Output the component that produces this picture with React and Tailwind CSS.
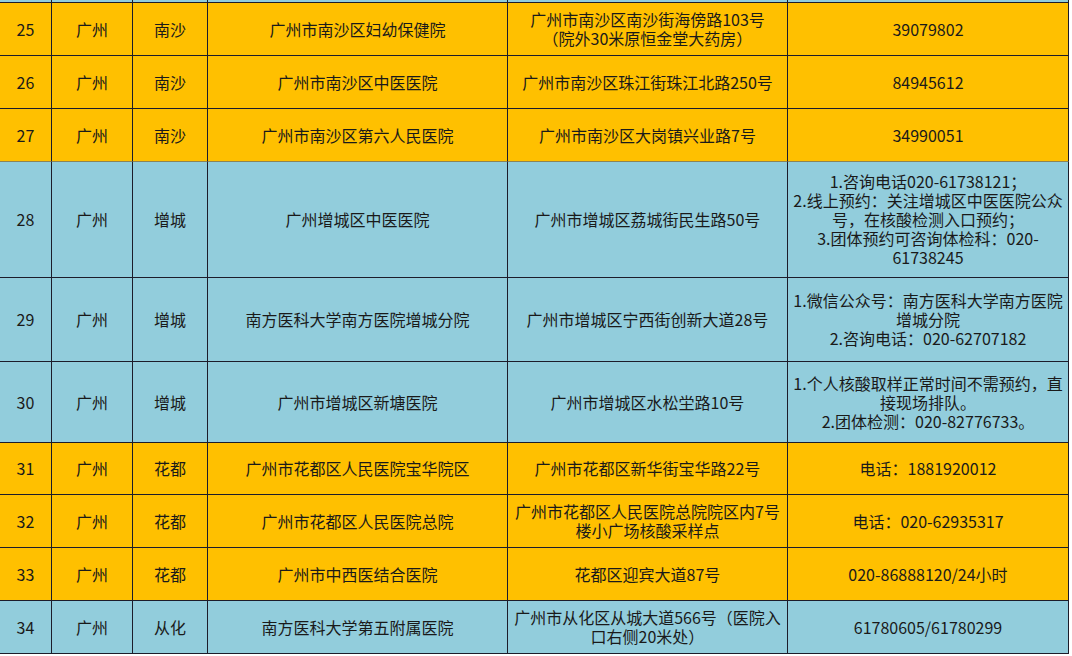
import React from "react";

const ORANGE = "bg-[#ffc000]";
const BLUE = "bg-[#92cddc]";

const rows = [
  {
    no: "25",
    district: "南沙",
    hospital: "广州市南沙区妇幼保健院",
    address: ["广州市南沙区南沙街海傍路103号", "（院外30米原恒金堂大药房）"],
    phone: ["39079802"],
    color: ORANGE,
  },
  {
    no: "26",
    district: "南沙",
    hospital: "广州市南沙区中医医院",
    address: ["广州市南沙区珠江街珠江北路250号"],
    phone: ["84945612"],
    color: ORANGE,
  },
  {
    no: "27",
    district: "南沙",
    hospital: "广州市南沙区第六人民医院",
    address: ["广州市南沙区大岗镇兴业路7号"],
    phone: ["34990051"],
    color: ORANGE,
    soft: true,
  },
  {
    no: "28",
    district: "增城",
    hospital: "广州增城区中医医院",
    address: ["广州市增城区荔城街民生路50号"],
    phone: [
      "1.咨询电话020-61738121；",
      "2.线上预约：关注增城区中医医院公众",
      "号，在核酸检测入口预约；",
      "3.团体预约可咨询体检科：020-",
      "61738245",
    ],
    color: BLUE,
  },
  {
    no: "29",
    district: "增城",
    hospital: "南方医科大学南方医院增城分院",
    address: ["广州市增城区宁西街创新大道28号"],
    phone: ["1.微信公众号：南方医科大学南方医院", "增城分院", "2.咨询电话：020-62707182"],
    color: BLUE,
  },
  {
    no: "30",
    district: "增城",
    hospital: "广州市增城区新塘医院",
    address: ["广州市增城区水松坣路10号"],
    phone: ["1.个人核酸取样正常时间不需预约，直", "接现场排队。", "2.团体检测：020-82776733。"],
    color: BLUE,
  },
  {
    no: "31",
    district: "花都",
    hospital: "广州市花都区人民医院宝华院区",
    address: ["广州市花都区新华街宝华路22号"],
    phone: ["电话：1881920012"],
    color: ORANGE,
  },
  {
    no: "32",
    district: "花都",
    hospital: "广州市花都区人民医院总院",
    address: ["广州市花都区人民医院总院院区内7号", "楼小广场核酸采样点"],
    phone: ["电话：020-62935317"],
    color: ORANGE,
  },
  {
    no: "33",
    district: "花都",
    hospital: "广州市中西医结合医院",
    address: ["花都区迎宾大道87号"],
    phone: ["020-86888120/24小时"],
    color: ORANGE,
  },
  {
    no: "34",
    district: "从化",
    hospital: "南方医科大学第五附属医院",
    address: ["广州市从化区从城大道566号（医院入", "口右侧20米处）"],
    phone: ["61780605/61780299"],
    color: BLUE,
  },
];

// one table cell; "soft" rows get the lighter bottom rule seen above row 28
const Cell = ({ color, soft, children }) => (
  <div
    className={`${color} flex flex-col items-center justify-center text-center px-1 border-r border-b border-r-[#1c1c2a] ${
      soft ? "border-b-[#8c8456]" : "border-b-[#1c1c2a]"
    }`}
  >
    {children}
  </div>
);

const Lines = ({ lines }) => (
  <>
    {lines.map((l, i) => (
      <span key={i} className="block whitespace-nowrap">
        {l}
      </span>
    ))}
  </>
);

const App = () => {
  return (
    <div
      className="w-[1072px] h-[656px] bg-white overflow-hidden text-[16px] leading-[19px] text-[#1a1a1a]"
      style={{ fontFamily: '"Noto Sans CJK SC", "Noto Sans", sans-serif' }}
    >
      <div className="grid w-[1069px] grid-cols-[52px_81px_75px_300px_280px_281px] grid-rows-[3px_53px_53px_53px_116px_84px_81px_52px_53px_53px_53px]">
        {/* tail of the previous row, cut off at the top */}
        {[0, 1, 2, 3, 4, 5].map((i) => (
          <div key={i} className="bg-[#92cddc] border-r border-b border-[#1c1c2a]" />
        ))}

        {rows.map((r) => (
          <React.Fragment key={r.no}>
            <Cell color={r.color} soft={r.soft}>
              {r.no}
            </Cell>
            <Cell color={r.color} soft={r.soft}>
              广州
            </Cell>
            <Cell color={r.color} soft={r.soft}>
              {r.district}
            </Cell>
            <Cell color={r.color} soft={r.soft}>
              {r.hospital}
            </Cell>
            <Cell color={r.color} soft={r.soft}>
              <Lines lines={r.address} />
            </Cell>
            <Cell color={r.color} soft={r.soft}>
              <Lines lines={r.phone} />
            </Cell>
          </React.Fragment>
        ))}
      </div>
    </div>
  );
};

export default App;
